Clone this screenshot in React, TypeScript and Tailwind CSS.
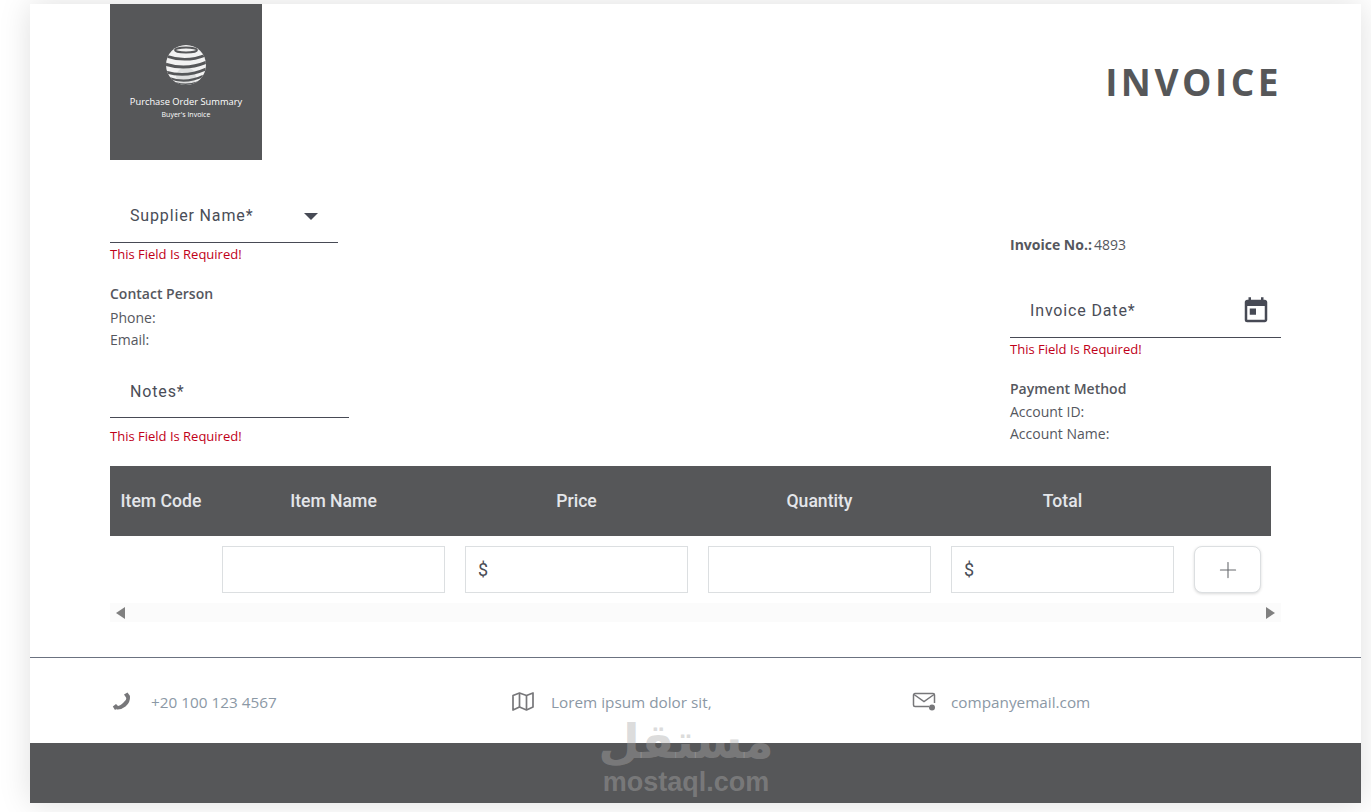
import { Plus } from 'lucide-react';
import { MdToday } from 'react-icons/md';

const sans = "font-['Open_Sans','Noto_Sans',sans-serif]";
const roboto = "font-['Roboto',sans-serif]";

function Globe() {
  return (
    <svg width="42" height="42" viewBox="0 0 42 42" className="block">
      <defs>
        <clipPath id="globe-clip">
          <circle cx="21" cy="21" r="20" />
        </clipPath>
      </defs>
      <circle cx="21" cy="21" r="20" fill="#f2f2f2" />
      <g clipPath="url(#globe-clip)" fill="none" stroke="#565759">
        <ellipse cx="21" cy="6" rx="11" ry="2.600" strokeWidth="2" />
        <path d="M1 12 Q21 19 41 11" strokeWidth="2.600" />
        <path d="M0 20 Q21 27 42 18" strokeWidth="3" />
        <path d="M1 28 Q21 34 41 25" strokeWidth="2.800" />
        <path d="M4 34 Q21 40 38 32" strokeWidth="2.200" />
        <path d="M11 39 Q22 42 33 38" strokeWidth="1.400" />
      </g>
      <circle cx="21" cy="33" r="10" fill="#565759" opacity="0.12" />
    </svg>
  );
}

function RequiredError({ className = '' }: { className?: string }) {
  return <p className={`text-[13px] leading-[18px] text-[#c00018] ${sans} ${className}`}>This Field Is Required!</p>;
}

function FieldLabel({ children }: { children: string }) {
  return <span className={`text-[16px] tracking-[0.85px] text-[#4a4d57] ${roboto}`}>{children}</span>;
}

function PhoneIcon() {
  return (
    <svg width="20" height="20" viewBox="0 0 20 20" fill="#77777a">
      <path d="M12 2.500 L15.500 0.500 L18 4 L15 7Z" />
      <path d="M15 4.500 L18 4 Q18.500 10.500 13.500 14.500 Q9 18 4.500 17.500 L4 14.500 Q8.500 14 11.500 10.500 Q14.500 8 15 4.500Z" />
      <path d="M0.800 14.500 L4 12 L7 15 L3 18Z" />
    </svg>
  );
}

function MapFoldIcon() {
  return (
    <svg width="22" height="19" viewBox="0 0 22 19" fill="none" stroke="#77777a" strokeWidth="1.700" strokeLinejoin="round">
      <path d="M1 3.500 L7.500 1 L14.500 3.500 L21 1 V15 L14.500 18 L7.500 15 L1 18Z" />
      <path d="M7.500 1 V15 M14.500 3.500 V18" />
    </svg>
  );
}

function MailDotIcon() {
  return (
    <svg width="24" height="20" viewBox="0 0 24 20" fill="none" stroke="#77777a" strokeWidth="1.500">
      <path d="M17 14.500H3a1.500 1.500 0 0 1-1.500-1.500V3A1.500 1.500 0 0 1 3 1.500h18A1.500 1.500 0 0 1 22.500 3v8" />
      <path d="M2 2.500l10 7 10-7" />
      <circle cx="20" cy="15.500" r="3" fill="#77777a" stroke="none" />
    </svg>
  );
}

function AmountInput({ prefix }: { prefix?: string }) {
  return (
    <div className={`flex h-[47px] items-center border border-[#dcdfe1] bg-white pl-3 text-[18px] text-[#4a4d57] ${roboto}`}>
      {prefix}
    </div>
  );
}

function ContactLine({ icon, text }: { icon: React.ReactNode; text: string }) {
  return (
    <div className="flex items-center pt-[4px]">
      <div className="ml-[2px] flex h-[20px] w-[39px] -translate-y-[1px] items-center">{icon}</div>
      <span className={`text-[15.300px] text-[#8b98a5] ${sans}`}>{text}</span>
    </div>
  );
}

export default function App() {
  return (
    <div className="h-[812px] w-[1371px] overflow-hidden bg-white pl-[30px] pt-1">
      <div className="relative h-[799px] w-[1331px] bg-white shadow-[0_0_30px_rgba(0,0,0,0.13)]">
        {/* Header */}
        <div className="flex justify-between pl-20 pr-[79px]">
          <div className="flex h-[156px] w-[152px] flex-col items-center bg-[#565759] pt-10 text-white">
            <Globe />
            <p className={`mt-[9px] text-[9.300px] leading-[14px] ${sans}`}>Purchase Order Summary</p>
            <p className={`text-[7px] leading-[12px] ${sans}`}>Buyer's Invoice</p>
          </div>
          <h1 className={`mt-[53px] text-[37px] font-bold leading-[50px] tracking-[3.500px] text-[#565759] ${sans}`}>
            INVOICE
          </h1>
        </div>

        {/* Form columns */}
        <div className="flex h-[306px] justify-between pl-20 pr-[80px]">
          <div className="flex flex-col">
            <div className="mt-[28px] flex h-[55px] w-[228px] items-center justify-between border-b border-[#474a55] pl-5 pr-[20px] pt-[2px]">
              <FieldLabel>Supplier Name*</FieldLabel>
              <span className="h-0 w-0 border-x-[7px] border-t-[7px] border-x-transparent border-t-[#474a55]" />
            </div>
            <RequiredError className="mt-[2px]" />
            <div className={`mt-[20px] text-[14px] leading-[22px] text-[#55575e] ${sans}`}>
              <p className="pb-[2px] font-semibold">Contact Person</p>
              <p>Phone:</p>
              <p>Email:</p>
            </div>
            <div className="mt-[18px] flex h-[49px] w-[239px] items-center border-b border-[#474a55] pb-[2px] pl-5">
              <FieldLabel>Notes*</FieldLabel>
            </div>
            <RequiredError className="mt-[9px]" />
          </div>

          <div className="flex w-[271px] flex-col">
            <p className={`mt-[75px] text-[14px] leading-[20px] text-[#55575e] ${sans}`}>
              <span className="pr-[2px] font-bold">Invoice No.:</span>4893
            </p>
            <div className="mt-[30px] flex h-[53px] items-center justify-between border-b border-[#474a55] pl-5 pr-[10px]">
              <FieldLabel>Invoice Date*</FieldLabel>
              <MdToday size={30} className="text-[#474a55]" />
            </div>
            <RequiredError className="mt-[2px]" />
            <div className={`mt-[20px] text-[14px] leading-[22px] text-[#55575e] ${sans}`}>
              <p className="pb-[1px] font-semibold">Payment Method</p>
              <p>Account ID:</p>
              <p>Account Name:</p>
            </div>
          </div>
        </div>

        {/* Items table */}
        <div className="ml-20 w-[1171px]">
          <div className={`grid h-[70px] w-[1161px] grid-cols-[102px_243px_243px_243px_243px_87px] items-center bg-[#565759] text-center text-[17.600px] font-medium text-[#e4e6ea] ${roboto}`}>
            <span>Item Code</span>
            <span>Item Name</span>
            <span>Price</span>
            <span>Quantity</span>
            <span>Total</span>
            <span />
          </div>
          <div className="grid w-[1161px] grid-cols-[102px_243px_243px_243px_243px_87px] pt-[10px]">
            <div />
            <div className="px-[10px]"><AmountInput /></div>
            <div className="px-[10px]"><AmountInput prefix="$" /></div>
            <div className="px-[10px]"><AmountInput /></div>
            <div className="px-[10px]"><AmountInput prefix="$" /></div>
            <div className="px-[10px]">
              <button className="flex h-[47px] w-[67px] items-center justify-center rounded-lg border border-[#dcdfe1] bg-white text-[#66686c] shadow-[0_1px_3px_rgba(0,0,0,0.15)]">
                <Plus size={26} strokeWidth={1} />
              </button>
            </div>
          </div>
          {/* Scrollbar */}
          <div className="mt-[10px] flex h-[19px] items-center justify-between bg-[#fbfbfb] px-[6px]">
            <span className="h-0 w-0 border-y-[6px] border-r-[9px] border-y-transparent border-r-[#808080]" />
            <span className="h-0 w-0 border-y-[6px] border-l-[9px] border-y-transparent border-l-[#808080]" />
          </div>
        </div>

        {/* Contact footer */}
        <div className="mt-[35px] border-t border-[#6b7280]">
          <div className="grid h-[85px] grid-cols-[400px_400px_400px] items-center pl-20">
            <ContactLine icon={<PhoneIcon />} text="+20 100 123 4567" />
            <ContactLine icon={<MapFoldIcon />} text="Lorem ipsum dolor sit," />
            <ContactLine icon={<MailDotIcon />} text="companyemail.com" />
          </div>
          <div className="h-[60px] bg-[#565759]" />
        </div>

        {/* Watermark */}
        <div className="pointer-events-none absolute left-[586px] top-[709px] flex w-[140px] flex-col items-center text-[rgba(170,170,170,0.42)]">
          <span className="font-['DejaVu_Sans',sans-serif] text-[48px] font-bold leading-[56px]" dir="rtl">مستقل</span>
          <span className="font-['Liberation_Sans',sans-serif] text-[27px] font-bold leading-[26px]">mostaql.com</span>
        </div>
      </div>
    </div>
  );
}
